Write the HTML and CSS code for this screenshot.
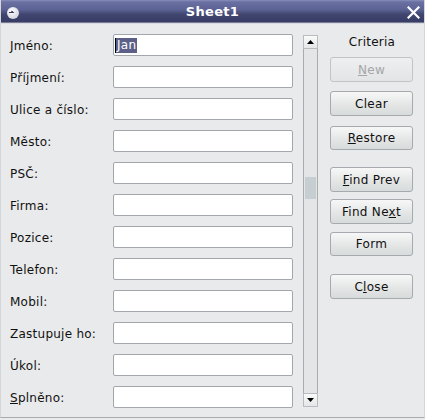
FILE: index.html
```html
<!DOCTYPE html>
<html>
<head>
<meta charset="utf-8">
<link rel="stylesheet" href="styles.css">
</head>
<body>
<div class="window">
  <div class="titlebar">
    <svg class="appicon" width="14" height="14" viewBox="0 0 14 14"><defs><radialGradient id="g" cx="0.4" cy="0.35" r="0.7"><stop offset="0" stop-color="#ffffff"/><stop offset="1" stop-color="#cfd1dc"/></radialGradient></defs><circle cx="7" cy="7" r="6" fill="url(#g)"/><path d="M3 6.5 L7 6.5 L5.5 5" stroke="#333a5a" stroke-width="1.2" fill="none"/></svg>
    <span class="title">Sheet1</span>
    <svg class="close" width="13" height="13" viewBox="0 0 13 13"><path d="M1.5 1.5 L11.5 11.5 M11.5 1.5 L1.5 11.5" stroke="#fff" stroke-width="2.2" stroke-linecap="square"/></svg>
  </div>
  <div class="content">
    <div class="form">
      <label class="lbl">Jméno:</label><div class="field"><span class="sel">Jan</span></div>
      <label class="lbl">Příjmení:</label><div class="field"></div>
      <label class="lbl">Ulice a číslo:</label><div class="field"></div>
      <label class="lbl">Město:</label><div class="field"></div>
      <label class="lbl">PSČ:</label><div class="field"></div>
      <label class="lbl">Firma:</label><div class="field"></div>
      <label class="lbl">Pozice:</label><div class="field"></div>
      <label class="lbl">Telefon:</label><div class="field"></div>
      <label class="lbl">Mobil:</label><div class="field"></div>
      <label class="lbl">Zastupuje ho:</label><div class="field"></div>
      <label class="lbl">Úkol:</label><div class="field"></div>
      <label class="lbl"><u>S</u>plněno:</label><div class="field"></div>
    </div>
    <div class="scrollbar">
      <div class="arrow"><svg width="7" height="4" viewBox="0 0 7 4"><path d="M0 4 L3.5 0 L7 4Z" fill="#000"/></svg></div>
      <div class="track"><div class="thumb"></div></div>
      <div class="arrow"><svg width="7" height="4" viewBox="0 0 7 4"><path d="M0 0 L3.5 4 L7 0Z" fill="#000"/></svg></div>
    </div>
    <div class="side">
      <div class="criteria">Criteria</div>
      <button class="btn disabled b-new"><u>N</u>ew</button>
      <button class="btn b-clear">Clear</button>
      <button class="btn b-restore"><u>R</u>estore</button>
      <button class="btn b-prev"><u>F</u>ind Prev</button>
      <button class="btn b-next">Find Ne<u>x</u>t</button>
      <button class="btn b-form">Form</button>
      <button class="btn b-close">C<u>l</u>ose</button>
    </div>
  </div>
</div>
</body>
</html>
```
FILE: styles.css
```css
* { box-sizing: border-box; }
html, body { margin: 0; padding: 0; }
body {
  width: 425px;
  height: 420px;
  background: #e9eaeb;
  font-family: "DejaVu Sans", sans-serif;
  font-size: 12px;
  color: #111;
  overflow: hidden;
}
.window {
  width: 425px;
  height: 418px;
  border-bottom: 1px solid #a9abae;
  border-left: 1px solid #d4d6d8;
  border-right: 1px solid #d4d6d8;
}
.titlebar {
  height: 24px;
  position: relative;
  display: flex;
  align-items: center;
  justify-content: center;
  background: linear-gradient(#8a90bc 0, #6a70a2 8%, #5c6294 40%, #40466f 60%, #363c64 92%, #c9cbd6 96%, #e9eaeb 100%);
}
.title {
  color: #fff;
  font-weight: bold;
  font-size: 13px;
  letter-spacing: 0.3px;
  margin-top: -1px;
}
.appicon { position: absolute; left: 5px; top: 6px; }
.close { position: absolute; left: 406px; top: 6px; }
.content {
  display: flex;
  align-items: flex-start;
  padding: 10px 0 0 9px;
}
.form {
  display: grid;
  grid-template-columns: 103px 180px;
  grid-auto-rows: 22px;
  row-gap: 10px;
}
.lbl {
  display: flex;
  align-items: center;
  padding-top: 1px;
  color: #111;
  white-space: nowrap;
  letter-spacing: 0.25px;
}
.field {
  background: #fff;
  border: 1px solid #a3a7ab;
  border-radius: 2px;
  display: flex;
  align-items: center;
  padding-left: 1px;
}
.sel {
  background: #5c6088;
  color: #fff;
  line-height: 15px;
  padding: 0 1px;
  border-left: 1px solid #000;
  letter-spacing: 0.25px;
}
.scrollbar {
  margin-left: 10px;
  margin-top: 1px;
  width: 15px;
  height: 372px;
  display: flex;
  flex-direction: column;
}
.arrow {
  height: 14px;
  background: linear-gradient(#fafafa, #e4e6e7);
  border: 1px solid #b9bcbf;
  display: flex;
  align-items: center;
  justify-content: center;
}
.track {
  flex: 1;
  border-left: 1px solid #a9acaf;
  border-right: 1px solid #a9acaf;
  background: #e4e5e6;
  position: relative;
}
.thumb {
  position: absolute;
  left: 1px;
  right: 1px;
  top: 128px;
  height: 22px;
  background: #c6ced2;
}
.side {
  margin-left: 12px;
  width: 83px;
  display: flex;
  flex-direction: column;
}
.criteria {
  text-align: center;
  line-height: 16px;
  color: #111;
  padding-left: 1px;
  letter-spacing: 0.25px;
}
.btn {
  height: 25px;
  border: 1px solid #a6aaae;
  border-radius: 3px;
  background: linear-gradient(#f7f7f7, #e3e5e5 60%, #d8dbdb);
  font-family: "DejaVu Sans", sans-serif;
  font-size: 12px;
  letter-spacing: 0.3px;
  color: #111;
  padding: 0;
}
.btn.disabled { color: #a4a6a8; background: linear-gradient(#eeeff0, #e2e4e5); border-color: #c2c5c8; }
.b-new { margin-top: 7px; }
.b-clear { margin-top: 9px; }
.b-restore { margin-top: 10px; height: 24px; }
.b-prev { margin-top: 17px; }
.b-next { margin-top: 7px; }
.b-form { margin-top: 8px; height: 24px; }
.b-close { margin-top: 18px; }
```
